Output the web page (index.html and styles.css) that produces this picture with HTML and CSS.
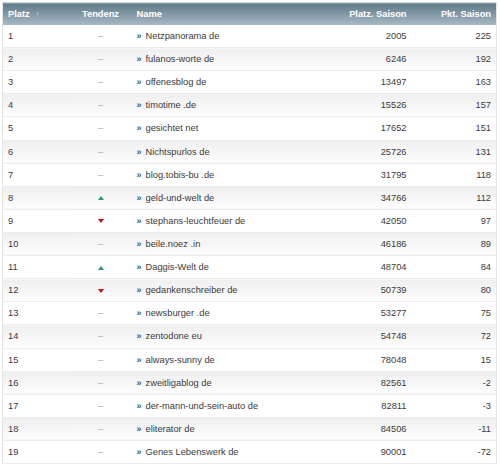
FILE: index.html
```html
<!DOCTYPE html>
<html>
<head>
<meta charset="utf-8">
<link rel="stylesheet" href="styles.css">
</head>
<body>
<table class="rank">
<colgroup>
<col class="w-platz"><col class="w-tend"><col class="w-name"><col class="w-ps"><col class="w-pkt">
</colgroup>
<thead>
<tr>
<th class="c-platz">Platz <span class="sort">&#8593;</span></th>
<th class="c-tend">Tendenz</th>
<th class="c-name">Name</th>
<th class="c-ps">Platz. Saison</th>
<th class="c-pkt">Pkt. Saison</th>
</tr>
</thead>
<tbody>
<tr><td class="c-platz">1</td><td class="c-tend"><span class="dash">–</span></td><td class="c-name"><span class="arr">»</span>Netzpanorama de</td><td class="c-ps">2005</td><td class="c-pkt">225</td></tr>
<tr><td class="c-platz">2</td><td class="c-tend"><span class="dash">–</span></td><td class="c-name"><span class="arr">»</span>fulanos-worte de</td><td class="c-ps">6246</td><td class="c-pkt">192</td></tr>
<tr><td class="c-platz">3</td><td class="c-tend"><span class="dash">–</span></td><td class="c-name"><span class="arr">»</span>offenesblog de</td><td class="c-ps">13497</td><td class="c-pkt">163</td></tr>
<tr><td class="c-platz">4</td><td class="c-tend"><span class="dash">–</span></td><td class="c-name"><span class="arr">»</span>timotime .de</td><td class="c-ps">15526</td><td class="c-pkt">157</td></tr>
<tr><td class="c-platz">5</td><td class="c-tend"><span class="dash">–</span></td><td class="c-name"><span class="arr">»</span>gesichtet net</td><td class="c-ps">17652</td><td class="c-pkt">151</td></tr>
<tr><td class="c-platz">6</td><td class="c-tend"><span class="dash">–</span></td><td class="c-name"><span class="arr">»</span>Nichtspurlos de</td><td class="c-ps">25726</td><td class="c-pkt">131</td></tr>
<tr><td class="c-platz">7</td><td class="c-tend"><span class="dash">–</span></td><td class="c-name"><span class="arr">»</span>blog.tobis-bu .de</td><td class="c-ps">31795</td><td class="c-pkt">118</td></tr>
<tr><td class="c-platz">8</td><td class="c-tend"><span class="up"></span></td><td class="c-name"><span class="arr">»</span>geld-und-welt de</td><td class="c-ps">34766</td><td class="c-pkt">112</td></tr>
<tr><td class="c-platz">9</td><td class="c-tend"><span class="down"></span></td><td class="c-name"><span class="arr">»</span>stephans-leuchtfeuer de</td><td class="c-ps">42050</td><td class="c-pkt">97</td></tr>
<tr><td class="c-platz">10</td><td class="c-tend"><span class="dash">–</span></td><td class="c-name"><span class="arr">»</span>beile.noez .in</td><td class="c-ps">46186</td><td class="c-pkt">89</td></tr>
<tr><td class="c-platz">11</td><td class="c-tend"><span class="up"></span></td><td class="c-name"><span class="arr">»</span>Daggis-Welt de</td><td class="c-ps">48704</td><td class="c-pkt">84</td></tr>
<tr><td class="c-platz">12</td><td class="c-tend"><span class="down"></span></td><td class="c-name"><span class="arr">»</span>gedankenschreiber de</td><td class="c-ps">50739</td><td class="c-pkt">80</td></tr>
<tr><td class="c-platz">13</td><td class="c-tend"><span class="dash">–</span></td><td class="c-name"><span class="arr">»</span>newsburger .de</td><td class="c-ps">53277</td><td class="c-pkt">75</td></tr>
<tr><td class="c-platz">14</td><td class="c-tend"><span class="dash">–</span></td><td class="c-name"><span class="arr">»</span>zentodone eu</td><td class="c-ps">54748</td><td class="c-pkt">72</td></tr>
<tr><td class="c-platz">15</td><td class="c-tend"><span class="dash">–</span></td><td class="c-name"><span class="arr">»</span>always-sunny de</td><td class="c-ps">78048</td><td class="c-pkt">15</td></tr>
<tr><td class="c-platz">16</td><td class="c-tend"><span class="dash">–</span></td><td class="c-name"><span class="arr">»</span>zweitligablog de</td><td class="c-ps">82561</td><td class="c-pkt">-2</td></tr>
<tr><td class="c-platz">17</td><td class="c-tend"><span class="dash">–</span></td><td class="c-name"><span class="arr">»</span>der-mann-und-sein-auto de</td><td class="c-ps">82811</td><td class="c-pkt">-3</td></tr>
<tr><td class="c-platz">18</td><td class="c-tend"><span class="dash">–</span></td><td class="c-name"><span class="arr">»</span>eliterator de</td><td class="c-ps">84506</td><td class="c-pkt">-11</td></tr>
<tr><td class="c-platz">19</td><td class="c-tend"><span class="dash">–</span></td><td class="c-name"><span class="arr">»</span>Genes Lebenswerk de</td><td class="c-ps">90001</td><td class="c-pkt">-72</td></tr>
</tbody>
</table>
</body>
</html>
```
FILE: styles.css
```css
html, body {
  margin: 0;
  padding: 0;
  background: #fff;
}
body {
  padding: 2px 3px 0 2px;
  font-family: "Liberation Sans", Arial, sans-serif;
  font-size: 9.3px;
  color: #3a3a3a;
}
.rank {
  width: 495px;
  table-layout: fixed;
  border-collapse: collapse;
  border: 1px solid #e4e4e4;
  border-top: 1px solid #c9d2d8;
}
.w-platz { width: 68px; }
.w-tend { width: 60px; }
.w-ps { width: 120px; }
.w-pkt { width: 90px; }
.rank th {
  height: 22px;
  padding: 0;
  font-weight: bold;
  color: #fff;
  background: linear-gradient(#5e7987, #a9bac4);
  text-align: left;
  white-space: nowrap;
}
.rank td {
  height: 22.12px;
  padding: 0;
  border-bottom: 1px solid #ececec;
  white-space: nowrap;
  overflow: hidden;
}
.rank tbody tr:nth-child(even) td {
  background: linear-gradient(#efefef, #fdfdfd);
}
.rank .c-platz { padding-left: 5px; }
.rank .c-tend { text-align: center; }
.rank .c-name { padding-left: 6px; }
.rank .c-ps { text-align: right; }
.rank .c-pkt { text-align: right; padding-right: 5px; }
.sort {
  color: #c9d4da;
  font-size: 8px;
  margin-left: 3px;
}
.dash { color: #aaa; }
.arr {
  color: #2e5f86;
  font-weight: bold;
  font-size: 9px;
  margin-right: 4px;
}
.up, .down {
  display: inline-block;
  width: 0;
  height: 0;
  border-left: 3.5px solid transparent;
  border-right: 3.5px solid transparent;
  vertical-align: middle;
}
.up { border-bottom: 4px solid #2e9a6c; }
.down { border-top: 4px solid #c0141a; }
```
